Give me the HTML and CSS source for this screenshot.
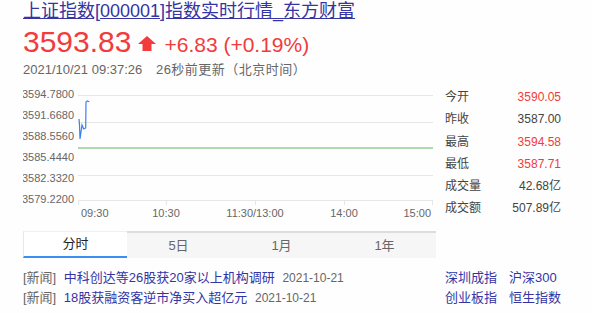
FILE: index.html
```html
<!DOCTYPE html>
<html lang="zh-CN">
<head>
    <meta charset="UTF-8">
    <title>上证指数[000001]指数实时行情_东方财富</title>
    <link rel="stylesheet" href="styles.css">
</head>
<body>
    <div class="page">
        <h1 class="title"><a href="">上证指数[000001]指数实时行情_东方财富</a></h1>

        <div class="quote">
            <span class="price">3593.83</span>
            <svg class="arrow" width="18" height="15" viewBox="0 0 18 15">
                <polygon points="9,0 18,8 13.5,8 13.5,15 4.5,15 4.5,8 0,8" fill="#f23b3b"/>
            </svg>
            <span class="change">+6.83 (+0.19%)</span>
        </div>

        <div class="time">
            <span>2021/10/21 09:37:26</span>
            <span class="ago">26秒前更新（北京时间）</span>
        </div>

        <div class="main">
            <!-- intraday chart -->
            <svg class="chart" width="413" height="135" viewBox="0 0 413 135">
                <g class="grid">
                    <line x1="55" y1="9.5" x2="410" y2="9.5"/>
                    <line x1="55" y1="36.5" x2="410" y2="36.5"/>
                    <line x1="55" y1="89.5" x2="410" y2="89.5"/>
                    <line x1="55" y1="114.5" x2="410" y2="114.5"/>
                    <line x1="55.5" y1="114" x2="55.5" y2="119"/>
                    <line x1="143.5" y1="114" x2="143.5" y2="119"/>
                    <line x1="232.5" y1="114" x2="232.5" y2="119"/>
                    <line x1="321.5" y1="114" x2="321.5" y2="119"/>
                    <line x1="409.5" y1="114" x2="409.5" y2="119"/>
                </g>
                <line class="prev-close" x1="55" y1="62" x2="410" y2="62"/>
                <polyline class="trend" points="56,33 56.5,39 57,53 59,39 60.7,43 62.7,42 63,16 64.3,15 66.3,15.7"/>
                <g class="ylabels">
                    <text x="51" y="12">3594.7800</text>
                    <text x="51" y="33">3591.6680</text>
                    <text x="51" y="54">3588.5560</text>
                    <text x="51" y="75">3585.4440</text>
                    <text x="51" y="96">3582.3320</text>
                    <text x="51" y="117">3579.2200</text>
                </g>
                <g class="xlabels">
                    <text x="58" y="131">09:30</text>
                    <text x="143" y="131" text-anchor="middle">10:30</text>
                    <text x="232" y="131" text-anchor="middle">11:30/13:00</text>
                    <text x="321" y="131" text-anchor="middle">14:00</text>
                    <text x="408" y="131" text-anchor="end">15:00</text>
                </g>
            </svg>

            <div class="stats">
                <span class="label">今开</span><span class="value up">3590.05</span>
                <span class="label">昨收</span><span class="value">3587.00</span>
                <span class="label">最高</span><span class="value up">3594.58</span>
                <span class="label">最低</span><span class="value up">3587.71</span>
                <span class="label">成交量</span><span class="value">42.68亿</span>
                <span class="label">成交额</span><span class="value">507.89亿</span>
            </div>
        </div>

        <div class="tabs">
            <div class="tab active">分时</div>
            <div class="tab">5日</div>
            <div class="tab">1月</div>
            <div class="tab">1年</div>
        </div>

        <div class="bottom">
            <div class="news">
                <div class="news-item">
                    <span class="tag">[新闻]</span>
                    <a href="">中科创达等26股获20家以上机构调研</a>
                    <span class="date">2021-10-21</span>
                </div>
                <div class="news-item">
                    <span class="tag">[新闻]</span>
                    <a href="">18股获融资客逆市净买入超亿元</a>
                    <span class="date">2021-10-21</span>
                </div>
                <div class="feedback">
                    <span class="dot"></span>
                    <span>(给页面提建议)</span>
                </div>
            </div>
            <div class="links">
                <a href="">深圳成指</a><a href="">沪深300</a>
                <a href="">创业板指</a><a href="">恒生指数</a>
            </div>
        </div>
    </div>
</body>
</html>
```

FILE: styles.css
```css
:root{
    --red: #f23b3b;
    --link: #3434a4;
    --gray: #666;
    --text: #444;
}
html,body{
    margin: 0;
    padding: 0;
    background: #fefefe;
    font-family: "Liberation Sans", "Noto Sans CJK SC", sans-serif;
    overflow: hidden;
}
a{
    color: var(--link);
    text-decoration: none;
}

.page{
    padding-left: 23px;
}

/* ==========
    Header
    ========== */
.title{
    margin: 0;
    font-size: 18px;
    font-weight: normal;
    line-height: 22px;
}
.title a{
    text-decoration: underline;
}

.quote{
    display: flex;
    align-items: baseline;
    margin-top: 3px;
    height: 34px;
    color: var(--red);
}
.price{
    font-size: 30px;
    line-height: 34px;
}
.arrow{
    margin: 0 8px 0 7px;
    align-self: center;
    position: relative;
    top: 1px;
}
.change{
    font-size: 21px;
}

.time{
    margin-top: 2px;
    font-size: 13px;
    line-height: 18px;
    color: var(--gray);
}
.time .ago{
    margin-left: 10px;
    letter-spacing: 0.5px;
}

/* ==========
    Chart + stats
    ========== */
.main{
    display: flex;
    margin-top: 7px;
    gap: 9px;
}
.chart{
    display: block;
}
.grid line{
    stroke: #e6e6e6;
    stroke-width: 1;
}
.prev-close{
    stroke: #5cb85c;
    stroke-width: 1.2;
}
.trend{
    fill: none;
    stroke: #3c7ef2;
    stroke-width: 1.2;
}
.ylabels text, .xlabels text{
    font-family: "Liberation Sans", sans-serif;
    font-size: 11px;
    fill: var(--gray);
}
.ylabels text{
    text-anchor: end;
}

.stats{
    display: grid;
    grid-template-columns: auto auto;
    width: 116px;
    font-size: 12px;
    line-height: 22.3px;
    color: var(--text);
    align-content: start;
}
.stats .value{
    text-align: right;
}
.stats .up{
    color: var(--red);
}

/* ==========
    Tabs
    ========== */
.tabs{
    display: flex;
    width: 413px;
    margin-top: 10px;
}
.tab{
    flex: 1;
    height: 25px;
    line-height: 25px;
    text-align: center;
    font-size: 13px;
    color: var(--gray);
    background: #f6f6f6;
    border-top: 2px solid #ddd;
}
.tab.active{
    color: #222;
    background: #fff;
    border-top: 1px solid #f0f0f0;
    border-left: 1px solid #e8e8e8;
    height: 24px;
    border-bottom: 2px solid #3b8ff0;
    line-height: 24px;
}

/* ==========
    News + links
    ========== */
.bottom{
    display: flex;
    margin-top: 10px;
    font-size: 13px;
    line-height: 20px;
}
.news{
    width: 422px;
}
.news-item .tag{
    color: var(--gray);
    margin-right: 4px;
}
.news-item .date{
    color: var(--gray);
    font-size: 12px;
    margin-left: 4px;
}
.feedback{
    display: flex;
    align-items: center;
    gap: 14px;
    padding-left: 135px;
    margin-top: 4px;
    color: var(--gray);
}
.feedback .dot{
    width: 12px;
    height: 12px;
    border-radius: 50%;
    background: #ddd;
}
.links{
    display: grid;
    grid-template-columns: 64px auto;
    align-content: start;
}
```
